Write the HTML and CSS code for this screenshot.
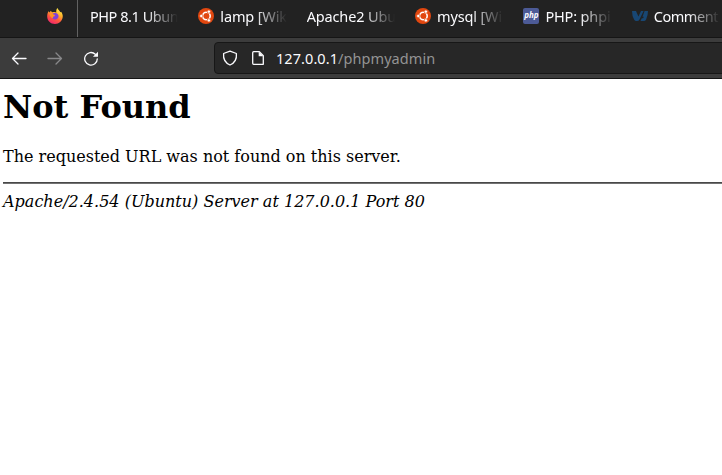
FILE: index.html
```html
<!DOCTYPE html>
<html lang="en">
<head>
<meta charset="utf-8">
<title>404 Not Found</title>
<link rel="stylesheet" href="styles.css">
</head>
<body>
<svg class="defs" width="0" height="0">
  <defs>
    <linearGradient id="flame" x1=".8" y1="0" x2=".3" y2="1"><stop offset="0" stop-color="#fff44f"/><stop offset=".35" stop-color="#ffb52b"/><stop offset=".65" stop-color="#ff5a3c"/><stop offset="1" stop-color="#f0246f"/></linearGradient>
    <symbol id="ubuntu" viewBox="0 0 16 16">
      <circle cx="8" cy="8" r="8" fill="#e2470f"/>
      <circle cx="8.4" cy="8" r="3.8" fill="none" stroke="#fff" stroke-width="1.6"/>
      <g fill="#fff" stroke="#e2470f" stroke-width=".7"><circle cx="3.3" cy="8" r="1.700"/><circle cx="10.900" cy="3.600" r="1.700"/><circle cx="10.900" cy="12.400" r="1.700"/></g>
    </symbol>
  </defs>
</svg>
<header class="browser">
  <nav class="tabs">
    <div class="pinned">
      <svg class="icon" viewBox="0 0 16 16"><path d="M1.6 3.2 2.8 4.5 3.6 2.7 5.2 4.3C7 3.7 8.2 3.8 9.3 4.5 9 2.6 9.6 1 10.5.1c.5 1.8 2 2.4 2.8 4.2l.8-.5c1.3 1.7 1.9 3.6 1.6 5.2C15.200 13.100 12 16 8 16 3.500 16 .2 12.700.2 8.500.2 6.300.7 4.600 1.600 3.200z" fill="url(#flame)"/><path d="M5.500 5.600c2-.9 4.200-.7 5.500 1 1.300 1.800.2 4.400-2.200 4.800-2 .3-3.700-.8-4-2.500l3-.7c-1.100-.4-1.700-1.200-2.300-2.600z" fill="#8041d9"/><path d="M2.600 5.400c1-.7 2-.7 2.900-.2.4 1 1.300 1.500 2.700 1.700-.2.900-1.500 1.100-2.100 1.700-.4.500-.3 1.200.3 1.700-2 0-3.700-1.800-3.800-4.900z" fill="#ff9424"/></svg>
    </div>
    <div class="tab"><span class="label tight">PHP 8.1 Ubun</span></div>
    <div class="tab"><svg class="icon"><use href="#ubuntu"/></svg><span class="label">lamp [Wik</span></div>
    <div class="tab"><span class="label">Apache2 Ubu</span></div>
    <div class="tab"><svg class="icon"><use href="#ubuntu"/></svg><span class="label">mysql [Wi</span></div>
    <div class="tab"><span class="icon php">php</span><span class="label">PHP: phpi</span></div>
    <div class="tab last"><svg class="icon" viewBox="0 0 16 16"><path d="M0 3h4l2.400 5.500L9 3h2.600L7.500 11.500Q6.800 13 5.200 13H4.300Q2.900 13 2.100 11.500 0 8 0 3zM12.600 3H16q0 4.500-1.900 8.500-.7 1.500-2.300 1.500H8.500l1.300-2.700h1.300l.8-1.600H10.500z" fill="#184774"/></svg><span class="label tight">Comment</span></div>
  </nav>
  <div class="toolbar">
    <svg class="icon" viewBox="0 0 16 16"><path d="M15 8.500H1.500M7 3 1.500 8.500 7 14" class="stroke"/></svg>
    <svg class="icon disabled" viewBox="0 0 16 16"><path d="M1 8.500h13.500M9 3 14.500 8.500 9 14" class="stroke"/></svg>
    <svg class="icon" viewBox="0 0 16 16"><path d="M14.300 8.800A6.300 6.300 0 1 1 12.300 4.200" class="stroke"/><path d="M15 1.700V6.800H9.900z" fill="#fbfbfe"/></svg>
    <div class="urlbar">
      <svg class="icon" viewBox="0 0 16 16"><path d="M8 1.100 14.400 3.500C14.900 8.500 12.500 13 8 15 3.500 13 1.100 8.500 1.600 3.500z" class="stroke"/></svg>
      <svg class="icon page" viewBox="0 0 16 16"><path d="M3.700 1.700h5.600l4 4v8.600H3.700q-1 0-1-1V2.700q0-1 1-1z" class="stroke"/><path d="M8.700 1.700v4.600h4.600z" fill="#fbfbfe"/></svg>
      <span class="url">127.0.0.1<span class="path">/phpmyadmin</span></span>
    </div>
  </div>
</header>
<main class="content">
  <h1>Not Found</h1>
  <p>The requested URL was not found on this server.</p>
  <hr>
  <address>Apache/2.4.54 (Ubuntu) Server at 127.0.0.1 Port 80</address>
</main>
</body>
</html>
```
FILE: styles.css
```css
* { box-sizing: border-box; }
body { margin: 0; background: #fff; overflow: hidden; height: 475px; }
.defs { position: absolute; }
.browser { color: #fbfbfe; font: 14.500px/20px "Noto Sans", sans-serif; }
.tabs { display: flex; height: 38px; background: #222; border-bottom: 1px solid #151515; overflow: hidden; }
.pinned { flex: none; width: 78px; display: flex; align-items: center; padding: 0 0 6px 47px; border-right: 1px solid #626262; }
.tab { flex: none; width: 108.350px; display: flex; align-items: center; gap: 6px; padding: 0 8px 6px 12px; }
.last { width: 102px; padding-right: 2px; }
.icon { flex: none; width: 16px; height: 16px; display: block; }
.label { flex: 1; min-width: 0; overflow: hidden; white-space: nowrap; letter-spacing: -.15px; mask-image: linear-gradient(to left, transparent, #000 32px); }
.tight { letter-spacing: -.45px; }
.php { background: #4c5a96; border-radius: 2px; font: italic bold 8px/14px "Open Sans", sans-serif; text-align: center; letter-spacing: -.1px; }
.toolbar { display: flex; align-items: center; height: 41px; background: #3c3c3c; border-bottom: 1px solid #151515; padding-left: 11px; gap: 20px; }
.disabled { opacity: .4; }
.stroke { fill: none; stroke: #fbfbfe; stroke-width: 1.300; stroke-linejoin: round; stroke-linecap: round; }
.urlbar { flex: 1; margin-left: 95px; margin-right: -5px; height: 32px; background: #272727; border: 1px solid #171717; border-radius: 4px; display: flex; align-items: center; padding-left: 7px; }
.page { margin-left: 12px; }
.url { margin-left: 10px; white-space: nowrap; letter-spacing: .07px; }
.path { color: #949494; }
.content { padding: 9px 0 0 3px; font: 16px/19px "DejaVu Serif", serif; color: #000; }
h1 { margin: 0; font-size: 32px; line-height: 38px; }
p { margin: 21px 0 16px; }
hr { margin: 0 0 8px; border: 0; height: 2px; background: #727272; border-top: 1px solid #484848; }
address { font-style: italic; letter-spacing: .015px; }
```
